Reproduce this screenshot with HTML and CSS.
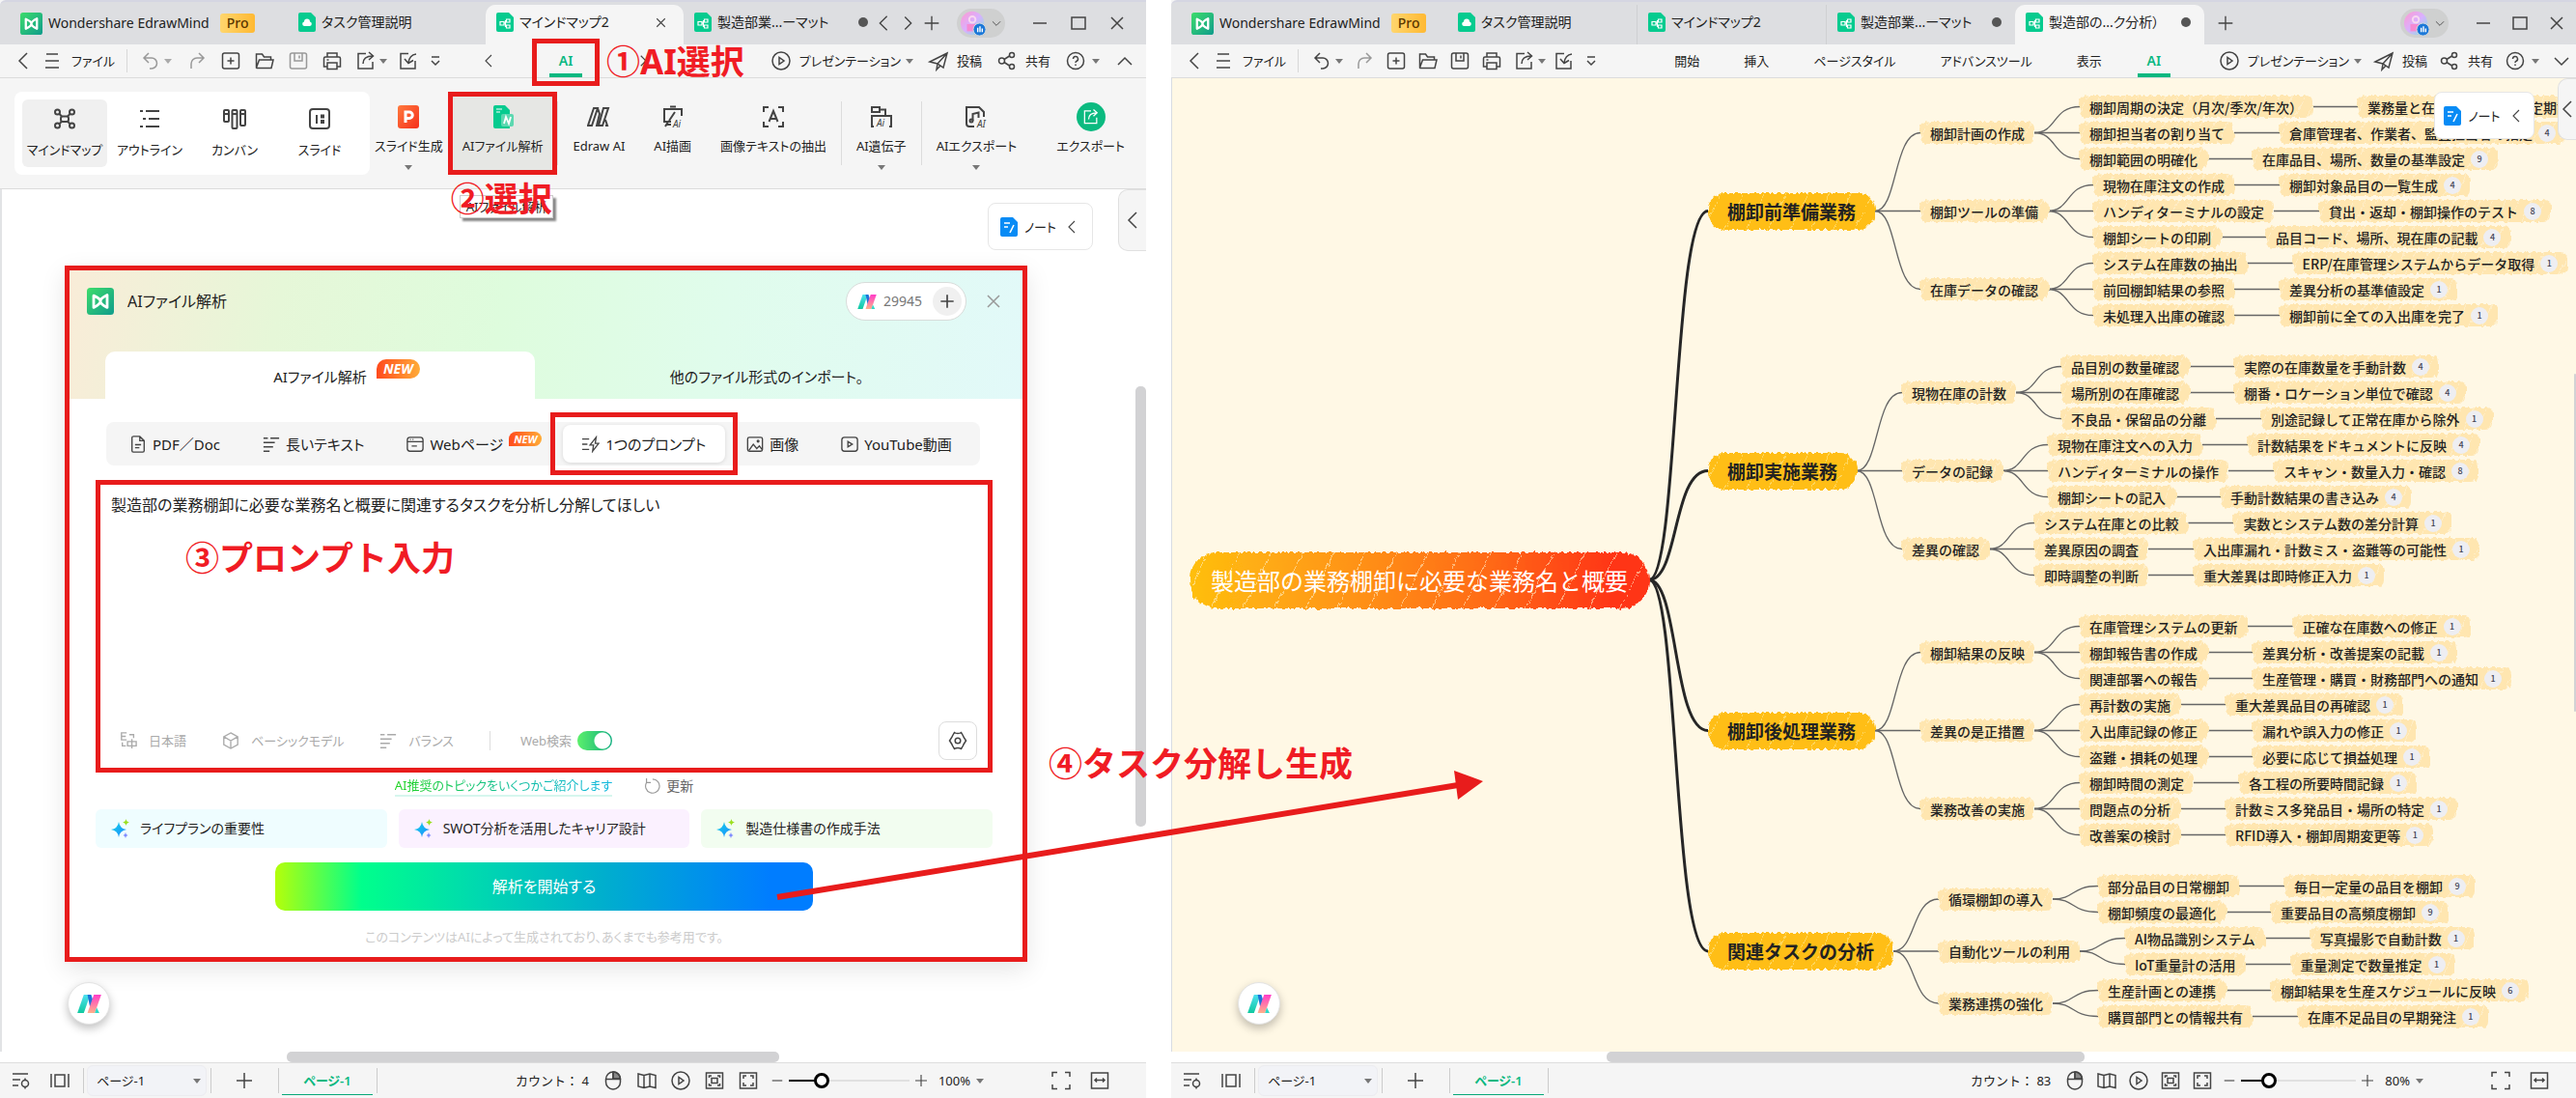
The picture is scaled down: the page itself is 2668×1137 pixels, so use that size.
FILE: index.html
```html
<!DOCTYPE html>
<html lang="ja">
	<head>
		<meta charset="UTF-8">
		<title>EdrawMind AIファイル解析</title>
		<link rel="stylesheet" href="styles.css">
	</head>
	<body>
		<!-- アイコン定義 -->
		<svg class="defs" width="0" height="0" aria-hidden="true">
			<defs>
				<linearGradient id="gGreen" x1="0" y1="0" x2="1" y2="1"><stop offset="0" stop-color="#3ddc6b"/><stop offset="1" stop-color="#109c8c"/></linearGradient>
				<linearGradient id="gTeal" x1="0" y1="0" x2="0" y2="1"><stop offset="0" stop-color="#4fe0f0"/><stop offset="1" stop-color="#10c9a0"/></linearGradient>
				<linearGradient id="gPink" x1="0" y1="0" x2="0" y2="1"><stop offset="0" stop-color="#ff3cc8"/><stop offset="1" stop-color="#ffb08a"/></linearGradient>
				<linearGradient id="gFace" x1="0" y1="0" x2="1" y2="1"><stop offset="0" stop-color="#ff9ad0"/><stop offset=".5" stop-color="#d9b0ff"/><stop offset="1" stop-color="#7fe8d8"/></linearGradient>
				<linearGradient id="gSlide" x1="0" y1="0" x2="1" y2="1"><stop offset="0" stop-color="#ff7a3d"/><stop offset="1" stop-color="#f5301c"/></linearGradient>
				<linearGradient id="gStar" x1="0" y1="0" x2="1" y2="1"><stop offset="0" stop-color="#13d6e8"/><stop offset="1" stop-color="#1e86ff"/></linearGradient>
				<filter id="rough" x="-5%" y="-15%" width="110%" height="130%">
					<feTurbulence type="fractalNoise" baseFrequency="0.25 0.08" numOctaves="2" seed="4"/>
					<feDisplacementMap in="SourceGraphic" scale="6" xChannelSelector="R" yChannelSelector="G"/>
				</filter>
			</defs>
			<symbol id="logo" viewBox="0 0 24 24"><rect width="24" height="24" rx="3" fill="url(#gGreen)"/><path d="M6 7v10.500q6-3 6-5.500t6-5.500V17.500q-6-3-6-5.500T6 7z" fill="none" stroke="#fff" stroke-width="2.400" stroke-linejoin="round"/></symbol>
			<symbol id="doc-cloud" viewBox="0 0 18 20"><path d="M2 0h11l5 5v13a2 2 0 0 1-2 2H2a2 2 0 0 1-2-2V2a2 2 0 0 1 2-2z" fill="#06cb8f"/><path d="M6 14a2.300 2.300 0 0 1 0-4.500 3 3 0 0 1 6 0 2.300 2.300 0 0 1 0 4.500z" fill="#fff"/></symbol>
			<symbol id="doc-map" viewBox="0 0 18 20"><path d="M2 0h11l5 5v13a2 2 0 0 1-2 2H2a2 2 0 0 1-2-2V2a2 2 0 0 1 2-2z" fill="#06cb8f"/><path d="M4 9.500h4v3.500H4zM10.500 7h3.500v3h-3.500zM10.500 13h3.500v3h-3.500zM8 11h1.500M10.500 8.500H9.500v6h1" fill="none" stroke="#fff" stroke-width="1.200"/></symbol>
			<symbol id="ai" viewBox="0 0 26 20"><path d="M7 0h7L7 20H0z" fill="url(#gTeal)"/><path d="M11 0h4l2 6-3 9z" fill="#1c74d8"/><path d="M18 0h8l-7 20h-8z" fill="url(#gPink)"/><path d="M21 14l3 6h-5z" fill="#30d8c8"/></symbol>
			<symbol id="avatar" viewBox="0 0 30 30"><circle cx="14" cy="15" r="13" fill="url(#gFace)"/><circle cx="14" cy="11" r="3.500" fill="none" stroke="#f8d8f0" stroke-width="2"/><path d="M8 16h12v8H8z" fill="#f58ad2"/><circle cx="22" cy="22" r="7" fill="#1b78d8" stroke="#d8dadd"/><path d="M20 20v5M22.500 18.500v6.500M25 21v4" stroke="#fff" stroke-width="1.500"/></symbol>
			<symbol id="left" viewBox="0 0 24 24"><path d="M16 4l-8 8 8 8"/></symbol>
			<symbol id="right" viewBox="0 0 24 24"><path d="M9 5l7 7-7 7"/></symbol>
			<symbol id="up" viewBox="0 0 24 24"><path d="M5 16l7-7 7 7"/></symbol>
			<symbol id="down" viewBox="0 0 24 24"><path d="M5 9l7 7 7-7"/></symbol>
			<symbol id="menu" viewBox="0 0 24 24"><path d="M6 5h12M5 12h14M5 19h14"/></symbol>
			<symbol id="plus" viewBox="0 0 24 24"><path d="M12 4v16M4 12h16"/></symbol>
			<symbol id="minus" viewBox="0 0 24 24"><path d="M5 12h14"/></symbol>
			<symbol id="square" viewBox="0 0 24 24"><path d="M5 6h14v12H5z"/></symbol>
			<symbol id="close" viewBox="0 0 24 24"><path d="M6 6l12 12M18 6L6 18"/></symbol>
			<symbol id="undo" viewBox="0 0 24 24"><path d="M10 4L5 9l5 5M5 9h8a5 5 0 0 1 0 11h-2"/></symbol>
			<symbol id="redo" viewBox="0 0 24 24"><path d="M14 4l5 5-5 5M19 9h-7a6 6 0 0 0-6 6v5"/></symbol>
			<symbol id="new" viewBox="0 0 24 24"><rect x="3.500" y="4" width="17" height="16" rx="2"/><path d="M12 8.500v7M8.500 12h7"/></symbol>
			<symbol id="open" viewBox="0 0 24 24"><path d="M3.500 18.500V5h6l2 3h7v3M3.500 19l3-8H21l-2 8.500H4z"/></symbol>
			<symbol id="save" viewBox="0 0 24 24"><rect x="3.500" y="4" width="17" height="16" rx="2"/><path d="M8 4v8h8V4M13 6.500v3"/></symbol>
			<symbol id="print" viewBox="0 0 24 24"><path d="M7 8V4h10v4M7 18H3.500V9.500Q3.500 8 5 8h14q1.500 0 1.500 1.500V18H17M7 14h10v6.500H7zM6.500 11h2"/></symbol>
			<symbol id="export" viewBox="0 0 24 24"><path d="M12 4.500H4V20h15v-7M9 15q0-8 10-8M15 3l4.500 4L15 11"/></symbol>
			<symbol id="import" viewBox="0 0 24 24"><path d="M12 4.500H4V20h15v-8M20 5q-7 1-8 9M8 10l4 4.500 5-3"/></symbol>
			<symbol id="more" viewBox="0 0 24 24"><path d="M8 8h8M8 12l4 4 4-4"/></symbol>
			<symbol id="play" viewBox="0 0 24 24"><circle cx="12" cy="12" r="9"/><path d="M10 8.500v7l5-3.500z"/></symbol>
			<symbol id="plane" viewBox="0 0 24 24"><path d="M3 13L21 4l-4 15-6-4zM11 15l10-11M11 15l-1 6 4-4"/></symbol>
			<symbol id="share" viewBox="0 0 24 24"><circle cx="6.500" cy="12" r="3"/><circle cx="17" cy="6" r="2.500"/><circle cx="17" cy="18" r="2.500"/><path d="M9 10.500L14.500 7M9 13.500l5.500 3.500"/></symbol>
			<symbol id="help" viewBox="0 0 24 24"><circle cx="12" cy="12" r="8.500"/><path d="M9.500 10a2.500 2.500 0 1 1 3.500 2.300q-1 .4-1 1.700M12 15.500v1.500"/></symbol>
			<symbol id="mind" viewBox="0 0 24 24"><rect x="8" y="9.500" width="8" height="5.500" rx="2"/><circle cx="4.500" cy="5" r="2.500"/><circle cx="19.500" cy="5" r="2.500"/><circle cx="4.500" cy="19" r="2.500"/><circle cx="19.500" cy="19" r="2.500"/><path d="M6.500 7L9 9.500M17.500 7L15 9.500M6.500 17L9 15M17.500 17L15 15"/></symbol>
			<symbol id="outline" viewBox="0 0 24 24"><path d="M2 4h3M8 4h14M5 12h3M11 12h11M2 20h3M8 20h14"/></symbol>
			<symbol id="kanban" viewBox="0 0 24 24"><rect x="1" y="3" width="5" height="12" rx="1"/><rect x="9.500" y="3" width="5" height="19" rx="1"/><rect x="18" y="3" width="5" height="16" rx="1"/><path d="M1 7h5M9.500 7h5M18 7h5"/></symbol>
			<symbol id="slide" viewBox="0 0 24 24"><rect x="2" y="2" width="20" height="20" rx="3"/><path d="M9 8v9" /><path d="M13 9.500h4M13 15h4" stroke-width="4"/></symbol>
			<symbol id="edraw" viewBox="0 0 24 24"><path d="M7 3h4L5 21H1zM11 3l2 6-3 12h4M17 3h5l-6 18h-4zM19 15l2 6h-2"/></symbol>
			<symbol id="ocr" viewBox="0 0 24 24"><path d="M2 7V2h5M17 2h5v5M22 17v5h-5M7 22H2v-5M7.500 17L12 6l4.500 11M9 14h6"/></symbol>
			<symbol id="page" viewBox="0 0 20 20"><path d="M4 1h8l5 5v11.500q0 1.500-1.500 1.500h-11Q3 19 3 17.500V2.500Q3 1 4.500 1zM12 1v5h5M6.500 10.500h7M6.500 14h5"/></symbol>
			<symbol id="lines" viewBox="0 0 20 20"><path d="M1 3h5M9 3h10M1 8h13M1 13h11M1 18h7"/></symbol>
			<symbol id="web" viewBox="0 0 20 20"><rect x="1" y="2" width="18" height="16" rx="3"/><path d="M1 7h18M4 4.500h1M7 4.500h1M6 12h6"/></symbol>
			<symbol id="bolt" viewBox="0 0 20 20"><path d="M0 4h8M0 10h6M0 16h8M16 2l-7 9h4l-1 7 7-9h-4z"/></symbol>
			<symbol id="image" viewBox="0 0 20 20"><rect x="1.500" y="2" width="17" height="16" rx="2"/><path d="M3 17l5-7 4 5 3-3 3 4"/><circle cx="13.500" cy="6.500" r="1"/></symbol>
			<symbol id="video" viewBox="0 0 20 20"><rect x="1" y="2" width="18" height="16" rx="3"/><path d="M8 7v6l5-3z"/></symbol>
			<symbol id="lang" viewBox="0 0 20 20"><path d="M8 1H2v8h6M2 5h5M11 3h5v4M3 12v4h4M9 11h10v5H9zM14 8v11"/></symbol>
			<symbol id="cube" viewBox="0 0 20 20"><path d="M10 1l8 4.500v9L10 19l-8-4.500v-9zM2 5.500l8 4.500 8-4.500M10 10v9"/></symbol>
			<symbol id="gear" viewBox="0 0 20 20"><path d="M6.500 1.500q1.500 1 3.500 1t3.500-1l2 3.500q.5 1.500 3 5-2.500 3.500-3 5l-2 3.500q-1.500-1-3.500-1t-3.500 1l-2-3.500q-.5-1.500-3-5 2.500-3.500 3-5z"/><circle cx="10" cy="10" r="2.800"/></symbol>
			<symbol id="refresh" viewBox="0 0 20 20"><path d="M4 6a8 8 0 1 0 7-4M4 1v5h5"/></symbol>
			<symbol id="star" viewBox="0 0 20 20"><path d="M9 3q1 7 8 8-7 1-8 8-1-7-8-8 7-1 8-8z" fill="url(#gStar)"/><path d="M16.500 0q.4 3 3.500 3.500-3 .5-3.500 3.500-.5-3-3.500-3.500 3-.5 3.500-3.500z" fill="#9be020"/><path d="M16 14q.3 2.500 2.500 3-2.200.4-2.500 3-.3-2.600-2.500-3 2.200-.5 2.500-3z" fill="#7f8cff"/></symbol>
			<symbol id="note" viewBox="0 0 18 20"><path d="M2 0h11l5 5v13a2 2 0 0 1-2 2H2a2 2 0 0 1-2-2V2a2 2 0 0 1 2-2z" fill="#078bf5"/><path d="M4 6h6M4 10h4M14 8l-4 8" stroke="#fff" stroke-width="1.600" fill="none"/></symbol>
			<symbol id="panel" viewBox="0 0 24 24"><path d="M3 5h16M3 11h8M3 17h6"/><circle cx="16" cy="15" r="3.500"/><path d="M16 9.500v2M16 18.500v2"/></symbol>
			<symbol id="strip" viewBox="0 0 24 24"><path d="M3 5v14M7 6h10v12H7zM21 5v14"/></symbol>
			<symbol id="mouse" viewBox="0 0 24 24"><path d="M12 3h1a7 7 0 0 1 6.500 7h-7.500z" fill="#888"/><rect x="4.500" y="3" width="15" height="18" rx="7.500"/><path d="M4.500 10.500h15M12 3v7.500"/></symbol>
			<symbol id="map" viewBox="0 0 24 24"><path d="M3 5l6 1.500L15 5l6 1.500v13L15 18l-6 1.500L3 18zM9 6.500v13M15 5v13"/></symbol>
			<symbol id="fit" viewBox="0 0 24 24"><path d="M3.500 4h17v16h-17zM6.500 9V7H9M15 7h2.500v2M17.500 15v2H15M9 17H6.500v-2M9 9.500h6v5H9z"/></symbol>
			<symbol id="expand" viewBox="0 0 24 24"><path d="M3.500 4h17v16h-17zM7 10V7h3M14 7h3v3M17 14v3h-3M10 17H7v-3"/></symbol>
			<symbol id="full" viewBox="0 0 24 24"><path d="M3 8V3.500h5M16 3.500h5V8M21 16v4.500h-5M8 20.500H3V16"/></symbol>
			<symbol id="width" viewBox="0 0 24 24"><path d="M3.500 4h17v16h-17zM6.500 11.500h11M9 9.500l-2 2 2 2M15 9.500l2 2-2 2"/></symbol>
		</svg>

		<div class="desk">
			<!-- 左ウィンドウ -->
			<section class="win win-left">
				<header class="titlebar">
					<div class="brand"><svg class="brand-logo"><use href="#logo"/></svg>Wondershare EdrawMind<span class="pro">Pro</span></div>
					<div class="tabs">
						<a class="tab" href="#"><svg class="tab-icon"><use href="#doc-cloud"/></svg>タスク管理説明</a>
						<a class="tab active" href="#"><svg class="tab-icon"><use href="#doc-map"/></svg>マインドマップ2<svg class="ico tab-close"><use href="#close"/></svg></a>
						<a class="tab" href="#"><svg class="tab-icon"><use href="#doc-map"/></svg>製造部業...ーマット<i class="dot"></i></a>
					</div>
					<div class="tab-nav">
						<button aria-label="前のタブ"><svg class="ico"><use href="#left"/></svg></button>
						<button aria-label="次のタブ"><svg class="ico"><use href="#right"/></svg></button>
						<button aria-label="新しいタブ"><svg class="ico"><use href="#plus"/></svg></button>
					</div>
					<button class="user" aria-label="アカウント"><svg class="face"><use href="#avatar"/></svg><svg class="ico mini"><use href="#down"/></svg></button>
					<div class="controls">
						<button aria-label="最小化"><svg class="ico"><use href="#minus"/></svg></button>
						<button aria-label="最大化"><svg class="ico"><use href="#square"/></svg></button>
						<button aria-label="閉じる"><svg class="ico"><use href="#close"/></svg></button>
					</div>
				</header>
				<nav class="toolbar">
					<button class="back" aria-label="戻る"><svg class="ico"><use href="#left"/></svg></button>
					<button class="file"><svg class="ico"><use href="#menu"/></svg>ファイル</button>
					<i class="sep"></i>
					<button class="split dim" aria-label="元に戻す"><svg class="ico"><use href="#undo"/></svg><i class="caret"></i></button>
					<button class="tool dim" aria-label="やり直し"><svg class="ico"><use href="#redo"/></svg></button>
					<button class="tool" aria-label="新規"><svg class="ico"><use href="#new"/></svg></button>
					<button class="tool" aria-label="開く"><svg class="ico"><use href="#open"/></svg></button>
					<button class="tool dim" aria-label="保存"><svg class="ico"><use href="#save"/></svg></button>
					<button class="tool" aria-label="印刷"><svg class="ico"><use href="#print"/></svg></button>
					<button class="split" aria-label="書き出し"><svg class="ico"><use href="#export"/></svg><i class="caret"></i></button>
					<button class="narrow" aria-label="読み込み"><svg class="ico"><use href="#import"/></svg></button>
					<button class="narrow" aria-label="その他"><svg class="ico"><use href="#more"/></svg></button>
					<div class="menus">
						<button class="narrow" aria-label="左へ"><svg class="ico mid"><use href="#left"/></svg></button>
						<a class="menu on mark mark-menu" href="#">AI</a>
						<button class="narrow" aria-label="右へ"><svg class="ico mid"><use href="#right"/></svg></button>
						<b class="callout step1">①AI選択</b>
					</div>
					<div class="actions">
						<button><svg class="ico"><use href="#play"/></svg>プレゼンテーション<i class="caret"></i></button>
						<button><svg class="ico"><use href="#plane"/></svg>投稿</button>
						<button><svg class="ico"><use href="#share"/></svg>共有</button>
						<button aria-label="ヘルプ"><svg class="ico"><use href="#help"/></svg><i class="caret"></i></button>
						<button aria-label="リボンを閉じる"><svg class="ico"><use href="#up"/></svg></button>
					</div>
				</nav>
				<div class="ribbon">
					<div class="views">
						<button class="view current"><svg class="big"><use href="#mind"/></svg>マインドマップ</button>
						<button class="view"><svg class="big"><use href="#outline"/></svg>アウトライン</button>
						<button class="view"><svg class="big"><use href="#kanban"/></svg>カンバン</button>
						<button class="view"><svg class="big"><use href="#slide"/></svg>スライド</button>
					</div>
					<button class="item first"><svg class="art" viewBox="0 0 24 24"><rect x="1" width="22" height="24" rx="3" fill="url(#gSlide)"/><path d="M9 18V7h4a3 3 0 0 1 0 6.500H9" fill="none" stroke="#fff" stroke-width="3"/></svg>スライド生成<i class="caret"></i></button>
					<div class="holder mark">
						<button class="item hover"><svg class="art" viewBox="0 0 24 24"><path d="M4 0h10l5 5v19H4a2 2 0 0 1-2-2V2a2 2 0 0 1 2-2z" fill="#06cb8f"/><path d="M5 4h6M5 7h4" stroke="#fff"/><rect x="10" y="9" width="13" height="13" rx="2" fill="#5cd8b0"/><path d="M13 19l2-7 3 7 2-7" stroke="#fff" stroke-width="1.800" fill="none"/></svg>AIファイル解析</button>
						<span class="tip">AIファイル解析</span>
						<b class="callout step2">②選択</b>
					</div>
					<i class="vline"></i>
					<button class="item"><svg class="big"><use href="#edraw"/></svg>Edraw AI</button>
					<button class="item"><svg class="big" viewBox="0 0 24 24"><path d="M10 17H3V4h18v7M9 1.500h6M7 17l-3 5M14 7l-6 9M5 20h5"/><text x="12" y="23">Ai</text></svg>AI描画</button>
					<button class="item"><svg class="big"><use href="#ocr"/></svg>画像テキストの抽出</button>
					<i class="vline"></i>
					<button class="item"><svg class="big" viewBox="0 0 24 24"><path d="M2 2h8v5H2zM10 4.500h6v6M4 22H2V11h20v11h-2"/><text x="7" y="22">Ai</text></svg>AI遺伝子<i class="caret"></i></button>
					<i class="vline"></i>
					<button class="item"><svg class="big" viewBox="0 0 24 24"><path d="M10 22H5a3 3 0 0 1-3-3V2h13l5 5v5M8.500 16V9l6-1.500V13"/><circle cx="7" cy="16" r="1.500"/><text x="13" y="23">AI</text></svg>AIエクスポート<i class="caret"></i></button>
					<button class="item last"><span class="round-export"><svg class="ico"><use href="#export"/></svg></span>エクスポート</button>
				</div>
				<main class="canvas plain">
					<button class="note"><svg class="tab-icon"><use href="#note"/></svg>ノート<svg class="ico mid"><use href="#left"/></svg></button>
					<button class="drawer" aria-label="パネルを開く"><svg class="ico"><use href="#left"/></svg></button>
					<div class="dialog mark">
						<div class="dialog-head">
							<div class="dialog-title">
								<svg class="dialog-logo"><use href="#logo"/></svg>
								<h1>AIファイル解析</h1>
								<div class="points"><svg class="coin"><use href="#ai"/></svg>29945<button aria-label="追加"><svg class="ico"><use href="#plus"/></svg></button></div>
								<button class="dialog-close" aria-label="閉じる"><svg class="ico"><use href="#close"/></svg></button>
							</div>
							<div class="dialog-tabs">
								<button class="dialog-tab selected">AIファイル解析<em class="new">NEW</em></button>
								<button class="dialog-tab">他のファイル形式のインポート。</button>
							</div>
						</div>
						<div class="dialog-body">
							<div class="segments">
								<button class="segment"><svg class="small"><use href="#page"/></svg>PDF／Doc</button>
								<button class="segment"><svg class="small"><use href="#lines"/></svg>長いテキスト</button>
								<button class="segment"><svg class="small"><use href="#web"/></svg>Webページ<em class="new tiny">NEW</em></button>
								<button class="segment chosen mark mark-seg"><svg class="small"><use href="#bolt"/></svg>1つのプロンプト</button>
								<button class="segment"><svg class="small"><use href="#image"/></svg>画像</button>
								<button class="segment"><svg class="small"><use href="#video"/></svg>YouTube動画</button>
							</div>
							<div class="prompt mark">
								<textarea aria-label="プロンプト">製造部の業務棚卸に必要な業務名と概要に関連するタスクを分析し分解してほしい</textarea>
								<b class="callout step3">③プロンプト入力</b>
								<div class="options">
									<button class="option"><svg class="small"><use href="#lang"/></svg>日本語</button>
									<button class="option"><svg class="small"><use href="#cube"/></svg>ベーシックモデル</button>
									<button class="option"><svg class="small"><use href="#lines"/></svg>バランス</button>
									<i class="option-sep"></i>
									<label class="web-search">Web検索<input type="checkbox" checked></label>
									<button class="gear" aria-label="設定"><svg class="small"><use href="#gear"/></svg></button>
								</div>
							</div>
							<div class="topic-line"><span class="topic-text">AI推奨のトピックをいくつかご紹介します</span><button class="reload"><svg class="small"><use href="#refresh"/></svg>更新</button></div>
							<div class="topics">
								<button class="topic cyan"><svg class="small"><use href="#star"/></svg>ライフプランの重要性</button>
								<button class="topic violet"><svg class="small"><use href="#star"/></svg>SWOT分析を活用したキャリア設計</button>
								<button class="topic lime"><svg class="small"><use href="#star"/></svg>製造仕様書の作成手法</button>
							</div>
							<button class="start">解析を開始する</button>
							<p class="notice">このコンテンツはAIによって生成されており、あくまでも参考用です。</p>
						</div>
					</div>
					<button class="ai-float" aria-label="AIアシスタント"><svg><use href="#ai"/></svg></button>
					<i class="vthumb"></i>
				</main>
				<div class="hscroll"><i class="hthumb"></i></div>
				<footer class="status">
					<button class="pane" aria-label="パネル"><svg class="ico"><use href="#panel"/></svg></button>
					<button class="pane" aria-label="表示切替"><svg class="ico"><use href="#strip"/></svg></button>
					<i class="sep"></i>
					<span class="picker"><select aria-label="ページ"><option>ページ-1</option></select><i class="caret"></i></span>
					<i class="sep"></i>
					<button class="add" aria-label="ページ追加"><svg class="ico"><use href="#plus"/></svg></button>
					<i class="sep"></i>
					<a class="sheet" href="#">ページ-1</a>
					<i class="sep"></i>
					<span class="count">カウント： 4</span>
					<button class="tool" aria-label="マウス"><svg class="ico"><use href="#mouse"/></svg></button>
					<button class="tool" aria-label="マップ"><svg class="ico"><use href="#map"/></svg></button>
					<button class="tool" aria-label="再生"><svg class="ico"><use href="#play"/></svg></button>
					<button class="tool" aria-label="中央"><svg class="ico"><use href="#fit"/></svg></button>
					<button class="tool" aria-label="全体"><svg class="ico"><use href="#expand"/></svg></button>
					<button class="step" aria-label="縮小"><svg class="ico mid"><use href="#minus"/></svg></button>
					<input class="zoom" type="range" aria-label="ズーム" min="0" max="100" value="24">
					<button class="step" aria-label="拡大"><svg class="ico mid"><use href="#plus"/></svg></button>
					<button class="percent">100%<i class="caret"></i></button>
					<button class="pane" aria-label="全画面"><svg class="ico"><use href="#full"/></svg></button>
					<button class="pane" aria-label="幅に合わせる"><svg class="ico"><use href="#width"/></svg></button>
				</footer>
			</section>

			<!-- 右ウィンドウ -->
			<section class="win win-right">
				<header class="titlebar">
					<div class="brand"><svg class="brand-logo"><use href="#logo"/></svg>Wondershare EdrawMind<span class="pro">Pro</span></div>
					<div class="tabs">
						<a class="tab" href="#"><svg class="tab-icon"><use href="#doc-cloud"/></svg>タスク管理説明</a>
						<a class="tab line" href="#"><svg class="tab-icon"><use href="#doc-map"/></svg>マインドマップ2</a>
						<a class="tab line" href="#"><svg class="tab-icon"><use href="#doc-map"/></svg>製造部業...ーマット<i class="dot"></i></a>
						<a class="tab active" href="#"><svg class="tab-icon"><use href="#doc-map"/></svg>製造部の...ク分析）<i class="dot"></i></a>
					</div>
					<div class="tab-nav">
						<button aria-label="新しいタブ"><svg class="ico"><use href="#plus"/></svg></button>
					</div>
					<button class="user" aria-label="アカウント"><svg class="face"><use href="#avatar"/></svg><svg class="ico mini"><use href="#down"/></svg></button>
					<div class="controls">
						<button aria-label="最小化"><svg class="ico"><use href="#minus"/></svg></button>
						<button aria-label="最大化"><svg class="ico"><use href="#square"/></svg></button>
						<button aria-label="閉じる"><svg class="ico"><use href="#close"/></svg></button>
					</div>
				</header>
				<nav class="toolbar">
					<button class="back" aria-label="戻る"><svg class="ico"><use href="#left"/></svg></button>
					<button class="file"><svg class="ico"><use href="#menu"/></svg>ファイル</button>
					<i class="sep"></i>
					<button class="split" aria-label="元に戻す"><svg class="ico"><use href="#undo"/></svg><i class="caret"></i></button>
					<button class="tool dim" aria-label="やり直し"><svg class="ico"><use href="#redo"/></svg></button>
					<button class="tool" aria-label="新規"><svg class="ico"><use href="#new"/></svg></button>
					<button class="tool" aria-label="開く"><svg class="ico"><use href="#open"/></svg></button>
					<button class="tool" aria-label="保存"><svg class="ico"><use href="#save"/></svg></button>
					<button class="tool" aria-label="印刷"><svg class="ico"><use href="#print"/></svg></button>
					<button class="split" aria-label="書き出し"><svg class="ico"><use href="#export"/></svg><i class="caret"></i></button>
					<button class="narrow" aria-label="読み込み"><svg class="ico"><use href="#import"/></svg></button>
					<button class="narrow" aria-label="その他"><svg class="ico"><use href="#more"/></svg></button>
					<div class="menus">
						<a class="menu" href="#">開始</a>
						<a class="menu" href="#">挿入</a>
						<a class="menu" href="#">ページスタイル</a>
						<a class="menu" href="#">アドバンスツール</a>
						<a class="menu" href="#">表示</a>
						<a class="menu on" href="#">AI</a>
					</div>
					<div class="actions">
						<button><svg class="ico"><use href="#play"/></svg>プレゼンテーション<i class="caret"></i></button>
						<button><svg class="ico"><use href="#plane"/></svg>投稿</button>
						<button><svg class="ico"><use href="#share"/></svg>共有</button>
						<button aria-label="ヘルプ"><svg class="ico"><use href="#help"/></svg><i class="caret"></i></button>
						<button aria-label="リボンを開く"><svg class="ico"><use href="#down"/></svg></button>
					</div>
				</nav>
				<main class="canvas cream">
					<div class="tree" id="tree"></div>
					<button class="note"><svg class="tab-icon"><use href="#note"/></svg>ノート<svg class="ico mid"><use href="#left"/></svg></button>
					<button class="drawer" aria-label="パネルを開く"><svg class="ico"><use href="#left"/></svg></button>
					<button class="ai-float" aria-label="AIアシスタント"><svg><use href="#ai"/></svg></button>
					<i class="vthumb"></i>
				</main>
				<div class="hscroll"><i class="hthumb"></i></div>
				<footer class="status">
					<button class="pane" aria-label="パネル"><svg class="ico"><use href="#panel"/></svg></button>
					<button class="pane" aria-label="表示切替"><svg class="ico"><use href="#strip"/></svg></button>
					<i class="sep"></i>
					<span class="picker"><select aria-label="ページ"><option>ページ-1</option></select><i class="caret"></i></span>
					<i class="sep"></i>
					<button class="add" aria-label="ページ追加"><svg class="ico"><use href="#plus"/></svg></button>
					<i class="sep"></i>
					<a class="sheet" href="#">ページ-1</a>
					<i class="sep"></i>
					<span class="count">カウント： 83</span>
					<button class="tool" aria-label="マウス"><svg class="ico"><use href="#mouse"/></svg></button>
					<button class="tool" aria-label="マップ"><svg class="ico"><use href="#map"/></svg></button>
					<button class="tool" aria-label="再生"><svg class="ico"><use href="#play"/></svg></button>
					<button class="tool" aria-label="中央"><svg class="ico"><use href="#fit"/></svg></button>
					<button class="tool" aria-label="全体"><svg class="ico"><use href="#expand"/></svg></button>
					<button class="step" aria-label="縮小"><svg class="ico mid"><use href="#minus"/></svg></button>
					<input class="zoom" type="range" aria-label="ズーム" min="0" max="100" value="20">
					<button class="step" aria-label="拡大"><svg class="ico mid"><use href="#plus"/></svg></button>
					<button class="percent">80%<i class="caret"></i></button>
					<button class="pane" aria-label="全画面"><svg class="ico"><use href="#full"/></svg></button>
					<button class="pane" aria-label="幅に合わせる"><svg class="ico"><use href="#width"/></svg></button>
				</footer>
			</section>

			<!-- 2つのウィンドウをまたぐ矢印 -->
			<svg class="arrow" viewBox="0 0 732 136"><path d="M1 132L706 16" stroke="#e81c1c" stroke-width="6"/><path d="M702 1l30 11-26 19z" fill="#e81c1c"/></svg>
			<b class="callout step4">④タスク分解し生成</b>
		</div>
		<script src="script.js"></script>
	</body>
</html>
```

FILE: styles.css
```css
*{
	margin:0;
	padding:0;
	box-sizing:border-box;
}
body{
	font-family:"Noto Sans","Noto Sans CJK JP",sans-serif;
	font-size:13px;
	line-height:20px;
	font-feature-settings:"palt";
	color:#222;
	background:#fff;
}
button,select,input,textarea{
	font:inherit;
	font-feature-settings:inherit;
	color:inherit;
	background:none;
	border:none;
}
button{
	display:flex;
	align-items:center;
	justify-content:center;
	white-space:nowrap;
}
a{
	color:inherit;
	text-decoration:none;
}
.defs{position:absolute;}
.ico,.small,.big{
	flex:none;
	width:24px;
	height:24px;
	fill:none;
	stroke:#444;
	stroke-width:1.5;
}
.big{stroke-width:2;}
.big text{
	font:italic 10px "Noto Sans",sans-serif;
	fill:#444;
	stroke:none;
}
.mid{width:18px;height:18px;}
.mini{width:14px;height:14px;}
.small{
	width:18px;
	height:18px;
}
.caret{
	flex:none;
	border:4px solid transparent;
	border-top:5px solid #777;
	border-bottom:none;
}

/* ウィンドウ */
.desk{
	position:relative;
	display:grid;
	grid-template-columns:1187fr 1455fr;
	gap:26px;
	height:100vh;
}
.win{
	display:flex;
	flex-direction:column;
	min-width:0;
	height:100vh;
	background:#f5f5f5;
}
.win-left{--tool:35px;--split:48px;--tab:205px;}
.win-right{--tool:33px;--split:45px;--tab:196px;}
.titlebar{
	flex:none;
	display:flex;
	align-items:center;
	height:46px;
	background:#dddee1;
	border-top:2px solid #d5d6e2;
	border-radius:6px 0 0 0;
}
.brand{
	flex:none;
	display:flex;
	align-items:center;
	gap:6px;
	width:298px;
	padding-left:21px;
	font-size:14px;
}
.win-right .brand{width:286px;}
.brand-logo{width:23px;height:23px;}
.pro{
	margin-left:5px;
	padding:0 7px;
	border-radius:3px;
	background:linear-gradient(90deg,#ffd66e,#ffb933);
	color:#5a3600;
	font-weight:500;
}
.tabs{
	display:flex;
	align-self:flex-end;
}
.tab{
	display:flex;
	align-items:center;
	gap:6px;
	width:var(--tab);
	height:41px;
	padding:0 11px 5px;
	font-size:14px;
	white-space:nowrap;
}
.tab.line{border-left:1px solid #cfd0d2;}
.tab.active{
	border-radius:10px 10px 0 0;
	background:#f5f5f5;
}
.tab-icon{width:18px;height:20px;}
.tab-close{
	width:17px;
	height:17px;
	margin-left:auto;
	margin-right:4px;
}
.dot{
	width:10px;
	height:10px;
	margin-left:auto;
	margin-right:3px;
	border-radius:50%;
	background:#555;
}
.tab-nav{display:flex;}
.tab-nav .ico{width:22px;height:22px;}
.win-left .tab-nav{margin-left:-9px;gap:3px;}
.win-right .tab-nav{margin-left:11px;}
.user{
	gap:3px;
	width:50px;
	height:30px;
	margin-left:auto;
	border-radius:15px;
	background:#cfd0d0;
}
.face{width:28px;height:28px;}
.controls{
	display:flex;
	gap:16px;
	margin:0 18px 0 24px;
}
.win-right .controls{
	gap:14px;
	margin-right:8px;
}
.toolbar{
	flex:none;
	display:flex;
	align-items:center;
	height:35px;
	padding-left:6px;
	border-bottom:1px solid #dcdcdc;
}
.back{width:36px;}
.file{gap:8px;}
.sep{
	flex:none;
	width:1px;
	height:24px;
	margin:0 6px 0 12px;
	background:#d8d8d8;
}
.tool{width:var(--tool);}
.split{
	width:var(--split);
	padding-left:6px;
	gap:2px;
	justify-content:flex-start;
}
.narrow{width:28px;}
.dim .ico{stroke:#999;}
.dim .caret{border-top-color:#aaa;}
.menus{
	position:relative;
	display:flex;
	align-self:stretch;
	align-items:center;
	gap:46px;
	margin-left:auto;
}
.win-left .menus{
	gap:31px;
	margin-left:27px;
}
.menu{
	display:flex;
	align-items:center;
	height:34px;
	white-space:nowrap;
}
.menu.on{
	justify-content:center;
	width:34px;
	border-bottom:4px solid #08b880;
	padding-top:4px;
	margin:0 -9px;
	color:#08b880;
	font-weight:600;
	font-size:14px;
}
.win-left .menu.on{margin:0 18px;}
.actions{
	display:flex;
	gap:14px;
	margin-left:auto;
	padding-right:10px;
}
.actions button{gap:7px;}
.actions .caret{margin-left:-2px;}
.win-right .actions{
	gap:11px;
	margin-left:58px;
	padding-right:3px;
}

/* リボン */
.ribbon{
	flex:none;
	display:flex;
	align-items:center;
	height:115px;
	border-bottom:1px solid #dcdcdc;
}
.views{
	display:flex;
	margin-left:15px;
	padding:8px;
	border-radius:8px;
	background:#fff;
}
.view{
	flex-direction:column;
	gap:10px;
	width:88px;
	height:70px;
	border-radius:6px;
}
.view.current{background:#f0f0f0;}
.item{
	flex-direction:column;
	justify-content:flex-start;
	gap:8px;
	height:86px;
	padding:14px 15px 0;
}
.item .caret{margin-top:2px;}
.item.first{padding:14px 5px 0;}
.item.hover{background:#e6e7e4;}
.item.last{
	margin-left:auto;
	padding-right:22px;
}
.art{width:24px;height:24px;}
.round-export{
	display:flex;
	align-items:center;
	justify-content:center;
	width:30px;
	height:30px;
	margin:-3px 0;
	border-radius:50%;
	background:#0bba80;
}
.round-export .ico{
	width:20px;
	height:20px;
	stroke:#fff;
}
.vline{
	width:1px;
	height:66px;
	background:#dcdcdc;
}
.holder{position:relative;}
.tip{
	position:absolute;
	left:12px;
	top:107px;
	padding:1px 6px;
	border:1px solid #ccc;
	background:#fff;
	box-shadow:3px 3px 2px #888;
	white-space:nowrap;
	z-index:2;
}

/* 赤い枠と番号 */
.mark{position:relative;}
.mark::after{
	content:"";
	position:absolute;
	inset:0;
	border:5px solid #e81c1c;
	pointer-events:none;
	z-index:3;
}
.mark-menu::after{inset:-6px -18px -13px;}
.mark-seg::after{inset:-13px;}
.callout{
	position:absolute;
	font-size:35px;
	line-height:40px;
	font-feature-settings:normal;
	color:#f01c24;
	white-space:nowrap;
	z-index:4;
}
.step1{left:136px;top:-2px;}
.step2{left:3px;top:91px;}
.step3{left:93px;top:61px;}
.step4{left:1086px;top:771px;}
.arrow{
	position:absolute;
	left:804px;
	top:797px;
	width:732px;
	height:136px;
	fill:none;
	z-index:5;
}

/* キャンバス */
.canvas{
	position:relative;
	flex:1;
	min-height:0;
	overflow:hidden;
}
.plain{
	padding:79px 123px 0 65px;
	background:#fff;
	border-left:2px solid #e2e3e5;
}
.cream{
	padding:16px 0 0 18px;
	background:#fff8e5;
	border-left:1px solid #d8dce2;
}
.note{
	position:absolute;
	top:14px;
	right:55px;
	gap:7px;
	width:109px;
	height:49px;
	border:1px solid #e6e6e6;
	border-radius:8px;
	background:#fff;
	z-index:2;
}
.drawer{
	position:absolute;
	top:0;
	right:0;
	width:29px;
	height:64px;
	border:1px solid #e0e0e0;
	border-right:none;
	border-radius:10px 0 0 10px;
	background:#f5f5f5;
	z-index:2;
}
.cream .note{right:43px;width:104px;}
.cream .drawer{width:19px;}
.ai-float{
	position:absolute;
	left:68px;
	bottom:28px;
	width:44px;
	height:44px;
	border:1px solid #e4e4e4;
	border-radius:50%;
	background:#fff;
	box-shadow:0 4px 10px rgba(0,0,0,.25);
}
.ai-float svg{width:25px;height:19px;}
.vthumb{
	position:absolute;
	right:0;
	top:204px;
	width:11px;
	height:456px;
	border-radius:5px;
	background:#d2d2d4;
}
.cream .vthumb{
	width:2px;
	top:306px;
	height:350px;
}
.hscroll{
	flex:none;
	height:11px;
	padding:0 32% 0 25%;
	background:#fff;
}
.win-right .hscroll{padding:0 35% 0 31%;}
.hthumb{
	display:block;
	height:11px;
	border-radius:5px;
	background:#d2d2d4;
}

/* ダイアログ */
.dialog{
	padding:5px;
	background:#fff;
	box-shadow:0 8px 24px rgba(0,0,0,.1);
}
.dialog-head{
	background:linear-gradient(100deg,#f9ecd8 0,#e6f7d8 22%,#defcdd 45%,#e0fcec 68%,#e2f9f9 100%);
}
.dialog-title{
	display:flex;
	align-items:center;
	height:84px;
	padding:0 18px 20px;
}
.dialog-logo{width:28px;height:28px;}
.dialog-title h1{
	margin-left:14px;
	font-size:16px;
	font-weight:400;
}
.points{
	display:flex;
	align-items:center;
	gap:7px;
	height:40px;
	margin-left:auto;
	padding:0 4px 0 11px;
	border:1px solid #d8dcda;
	border-radius:20px;
	background:#fff;
	font-size:14px;
	color:#777;
}
.points button{
	width:30px;
	height:30px;
	margin-left:4px;
	border-radius:50%;
	background:#f0f0f0;
}
.points .ico{width:20px;height:20px;stroke-width:2;}
.coin{width:20px;height:15px;}
.dialog-close{margin-left:16px;}
.dialog-close .ico{stroke:#999;}
.dialog-tabs{
	display:grid;
	grid-template-columns:445fr 480fr;
	padding:0 25px 0 37px;
}
.dialog-tab{
	height:49px;
	padding-top:2px;
	font-size:15px;
}
.dialog-tab.selected{
	position:relative;
	border-radius:10px 10px 0 0;
	background:#fff;
}
.new{
	padding:0 7px;
	border-radius:10px 10px 10px 0;
	background:linear-gradient(90deg,#ff4a1c,#ffac38);
	color:#fff;
	font-weight:700;
	font-size:14px;
	line-height:20px;
}
.dialog-tab .new{
	position:absolute;
	left:281px;
	top:8px;
}
.new.tiny{
	padding:0 5px;
	font-size:11px;
	line-height:15px;
	margin-bottom:10px;
}
.dialog-body{
	padding:24px 31px 2px 27px;
}
.segments{
	display:flex;
	align-items:center;
	height:45px;
	margin:0 13px 0 11px;
	padding:0 2px;
	border-radius:8px;
	background:#f5f5f5;
}
.segment{
	gap:6px;
	height:39px;
	padding:0 22px;
	font-size:15px;
}
.segment.chosen{
	padding:0 20px;
	border-radius:8px;
	background:#fff;
	box-shadow:0 1px 4px rgba(0,0,0,.12);
}
.prompt{
	display:flex;
	flex-direction:column;
	height:303px;
	margin-top:15px;
	padding:13px 16px;
}
.prompt textarea{
	flex:1;
	resize:none;
	outline:none;
	font-size:16px;
	line-height:26px;
}
.options{
	display:flex;
	align-items:center;
	gap:37px;
	height:40px;
	padding-left:9px;
	color:#aaa;
}
.option{gap:12px;}
.option .small{stroke:#aaa;}
.option-sep{
	width:1px;
	height:20px;
	background:#ddd;
}
.web-search{
	display:flex;
	align-items:center;
	gap:6px;
	margin-left:-6px;
}
.web-search input{
	appearance:none;
	width:36px;
	height:20px;
	border-radius:10px;
	background:radial-gradient(circle at 26px 10px,#fff 8px,transparent 9px),linear-gradient(90deg,#5cf06c,#0fae7e);
}
.gear{
	width:40px;
	height:40px;
	margin-left:auto;
	border:1px solid #ddd;
	border-radius:8px;
}
.gear .small{width:20px;height:20px;}
.topic-line{
	display:flex;
	align-items:center;
	justify-content:center;
	gap:32px;
	height:38px;
	padding-bottom:10px;
}
.topic-text{
	color:transparent;
	background:linear-gradient(90deg,#1fd31f,#12bfa0 55%,#12b8e0);
	-webkit-background-clip:text;
	background-clip:text;
	border-bottom:2px solid #d6f6ee;
}
.reload{
	gap:6px;
	font-size:14px;
	color:#666;
}
.reload .small{stroke:#999;stroke-width:1.3;}
.topics{
	display:grid;
	grid-template-columns:1fr 1fr 1fr;
	gap:12px;
}
.topic{
	justify-content:flex-start;
	gap:11px;
	height:40px;
	padding-left:15px;
	border-radius:6px;
	font-size:14px;
}
.topic .small{width:20px;height:20px;stroke:none;}
.cyan{background:#effdff;}
.violet{background:#fbf1ff;}
.lime{background:#f2fdf0;}
.start{
	width:60%;
	height:50px;
	margin:15px auto 0;
	border-radius:10px;
	background:linear-gradient(90deg,#b4ff0a,#00ff8c 16%,#00d8b0 38%,#00b0cc 60%,#007dff 92%);
	color:#fff;
	font-size:16px;
}
.notice{
	margin-top:15px;
	height:31px;
	line-height:24px;
	text-align:center;
	color:#ccc;
}

/* ステータスバー */
.status{
	flex:none;
	display:flex;
	align-items:center;
	height:37px;
	padding:0 28px 0 2px;
	border-top:1px solid #ddd;
}
.win-right .status{padding-right:18px;}
.status .sep{
	height:26px;
	margin:0 3px 0 4px;
	background:#ccc;
}
.pane{width:40px;}
.picker{
	position:relative;
	display:flex;
	align-items:center;
	width:124px;
}
.picker select{
	appearance:none;
	width:124px;
	height:32px;
	padding-left:9px;
	border:1px solid #ececf0;
	border-radius:6px;
	background:#f2f3f7;
}
.picker .caret{
	position:absolute;
	right:6px;
}
.add{width:62px;}
.sheet{
	width:94px;
	height:30px;
	padding-top:5px;
	border-bottom:1px solid #08a878;
	color:#08b880;
	font-weight:600;
	text-align:center;
}
.count{
	margin-left:auto;
	margin-right:8px;
	font-feature-settings:normal;
}
.step{width:24px;}
.zoom{
	appearance:none;
	width:125px;
	height:18px;
	background:linear-gradient(90deg,#000 27%,#e0e0e0 27%) center/100% 2px no-repeat;
}
.win-right .zoom{width:119px;}
.zoom::-webkit-slider-thumb{
	appearance:none;
	width:16px;
	height:16px;
	border:3px solid #000;
	border-radius:50%;
	background:#fff;
}
.percent{
	gap:6px;
	margin:0 60px 0 6px;
}

/* マインドマップ */
.tree{
	position:relative;
	width:max-content;
	font-family:"Noto Sans CJK JP",sans-serif;
	font-feature-settings:normal;
}
.lines{
	position:absolute;
	left:0;
	top:0;
	width:100%;
	height:100%;
	overflow:visible;
	fill:none;
	stroke:#666;
	stroke-width:1.3;
}
.lines .main{
	stroke:#262626;
	stroke-width:3;
}
.branch{
	display:flex;
	align-items:center;
}
.kids{
	margin-left:47px;
}
.node{
	position:relative;
	z-index:1;
	display:flex;
	align-items:center;
	height:23px;
	margin:2px 0;
	padding:0 10px;
	font-size:14px;
	font-weight:500;
	white-space:nowrap;
}
.node::before{
	content:"";
	position:absolute;
	inset:0;
	z-index:-1;
	border-radius:7px;
	background:repeating-linear-gradient(115deg,transparent 0 7px,rgba(255,248,229,.4) 7px 8px,transparent 8px 12px),#ffe6b0;
	filter:url(#rough);
}
.level0 > .node{
	height:58px;
	margin-top:40px;
	padding:0 22px;
	font-size:24px;
	font-weight:400;
	color:#fff;
}
.level0 > .node::before{
	border-radius:28px;
	background:repeating-linear-gradient(117deg,transparent 0 17px,rgba(255,240,200,.55) 17px 18px,transparent 18px 29px),linear-gradient(90deg,#ffbf0f,#ff9418 35%,#ff6a18 65%,#ff3517 92%);
}
.level0 > .kids{margin-left:61px;}
.level1 > .node{
	height:38px;
	padding:0 20px;
	font-size:19px;
	font-weight:700;
}
.level1 > .node::before{
	border-radius:17px;
	background:repeating-linear-gradient(117deg,transparent 0 12px,rgba(255,220,110,.8) 12px 13px,transparent 13px 20px),#ffbe14;
}
.level1 + .level1{margin-top:26px;}
.leaf .badge{
	width:18px;
	height:18px;
	margin-left:6px;
	border-radius:50%;
	background:#eeeef2;
	color:#445;
	font-size:9px;
	line-height:18px;
	text-align:center;
}
```

FILE: script.js
```js
//[親, [子...]] の形。末端は [文字, 件数]
var data=["製造部の業務棚卸に必要な業務名と概要",[
	["棚卸前準備業務",[
		["棚卸計画の作成",[
			["棚卸周期の決定（月次/季次/年次）",[["業務量と在庫状況に基づく定期計画",4]]],
			["棚卸担当者の割り当て",[["倉庫管理者、作業者、監査担当者の指定",4]]],
			["棚卸範囲の明確化",[["在庫品目、場所、数量の基準設定",9]]]
		]],
		["棚卸ツールの準備",[
			["現物在庫注文の作成",[["棚卸対象品目の一覧生成",4]]],
			["ハンディターミナルの設定",[["貸出・返却・棚卸操作のテスト",8]]],
			["棚卸シートの印刷",[["品目コード、場所、現在庫の記載",4]]]
		]],
		["在庫データの確認",[
			["システム在庫数の抽出",[["ERP/在庫管理システムからデータ取得",1]]],
			["前回棚卸結果の参照",[["差異分析の基準値設定",1]]],
			["未処理入出庫の確認",[["棚卸前に全ての入出庫を完了",1]]]
		]]
	]],
	["棚卸実施業務",[
		["現物在庫の計数",[
			["品目別の数量確認",[["実際の在庫数量を手動計数",4]]],
			["場所別の在庫確認",[["棚番・ロケーション単位で確認",4]]],
			["不良品・保留品の分離",[["別途記録して正常在庫から除外",1]]]
		]],
		["データの記録",[
			["現物在庫注文への入力",[["計数結果をドキュメントに反映",4]]],
			["ハンディターミナルの操作",[["スキャン・数量入力・確認",8]]],
			["棚卸シートの記入",[["手動計数結果の書き込み",4]]]
		]],
		["差異の確認",[
			["システム在庫との比較",[["実数とシステム数の差分計算",1]]],
			["差異原因の調査",[["入出庫漏れ・計数ミス・盗難等の可能性",1]]],
			["即時調整の判断",[["重大差異は即時修正入力",1]]]
		]]
	]],
	["棚卸後処理業務",[
		["棚卸結果の反映",[
			["在庫管理システムの更新",[["正確な在庫数への修正",1]]],
			["棚卸報告書の作成",[["差異分析・改善提案の記載",1]]],
			["関連部署への報告",[["生産管理・購買・財務部門への通知",1]]]
		]],
		["差異の是正措置",[
			["再計数の実施",[["重大差異品目の再確認",1]]],
			["入出庫記録の修正",[["漏れや誤入力の修正",1]]],
			["盗難・損耗の処理",[["必要に応じて損益処理",1]]]
		]],
		["業務改善の実施",[
			["棚卸時間の測定",[["各工程の所要時間記録",1]]],
			["問題点の分析",[["計数ミス多発品目・場所の特定",1]]],
			["改善案の検討",[["RFID導入・棚卸周期変更等",1]]]
		]]
	]],
	["関連タスクの分析",[
		["循環棚卸の導入",[
			["部分品目の日常棚卸",[["毎日一定量の品目を棚卸",9]]],
			["棚卸頻度の最適化",[["重要品目の高頻度棚卸",9]]]
		]],
		["自動化ツールの利用",[
			["AI物品識別システム",[["写真撮影で自動計数",1]]],
			["IoT重量計の活用",[["重量測定で数量推定",1]]]
		]],
		["業務連携の強化",[
			["生産計画との連携",[["棚卸結果を生産スケジュールに反映",6]]],
			["購買部門との情報共有",[["在庫不足品目の早期発注",1]]]
		]]
	]]
]];
var tree=document.getElementById("tree");

//再帰で枝を作る
function build(item,level){
	var branch=document.createElement("div");
	branch.className="branch level"+level;
	var node=document.createElement("div");
	node.className="node";
	node.textContent=item[0];
	branch.appendChild(node);
	if(Array.isArray(item[1])){
		var kids=document.createElement("div");
		kids.className="kids";
		item[1].forEach(function(e){
			kids.appendChild(build(e,level+1));
		})
		branch.appendChild(kids);
	}else{
		branch.className+=" leaf";
		var badge=document.createElement("span");
		badge.className="badge";
		badge.textContent=item[1];
		node.appendChild(badge);
	}
	return branch;
}

//親から子への線を引く
function drawLines(){
	var old=tree.querySelector(".lines");
	if(old){
		tree.removeChild(old);
	}
	var box=tree.getBoundingClientRect();
	var html="";
	tree.querySelectorAll(".kids").forEach(function(kids){
		var a=kids.previousSibling.getBoundingClientRect();
		var x1=a.right-box.left,y1=a.top+a.height/2-box.top;
		var main=kids.parentNode.classList.contains("level0");
		for(var i=0;i<kids.children.length;i++){
			var b=kids.children[i].firstChild.getBoundingClientRect();
			var x2=b.left-box.left,y2=b.top+b.height/2-box.top;
			var w=x2-x1;
			html+='<path'+(main?' class="main"':'')+' d="M'+x1+' '+y1+' C'+(x1+w*0.5)+' '+y1+' '+(x1+w*0.4)+' '+y2+' '+x2+' '+y2+'"/>';
		}
	})
	var svg=document.createElementNS("http://www.w3.org/2000/svg","svg");
	svg.setAttribute("class","lines");
	svg.innerHTML=html;
	tree.insertBefore(svg,tree.firstChild);
}

tree.appendChild(build(data,0));
drawLines();
window.onresize=drawLines;
```
